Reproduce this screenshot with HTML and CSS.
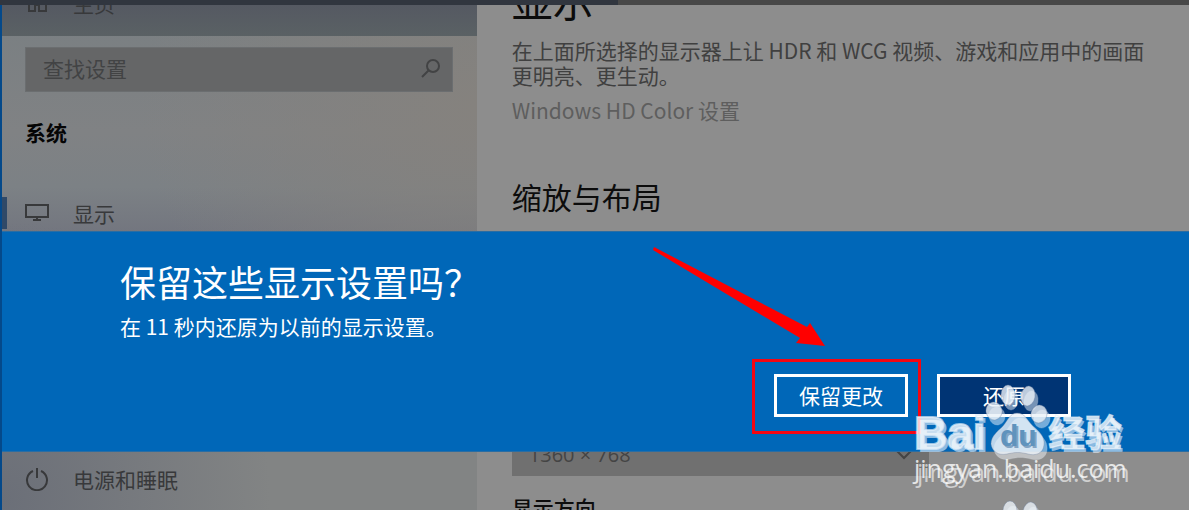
FILE: index.html
```html
<!DOCTYPE html>
<html lang="zh-CN">
<head>
    <meta charset="UTF-8">
    <title>设置</title>
    <link rel="stylesheet" href="styles.css">
</head>
<body>
    <div class="titlebar"></div>

    <div class="window">
        <nav class="sidebar">
            <a class="nav-item home" href="#">
                <svg class="icon" viewBox="0 0 24 24"><path d="M4 8v12h6v-6h4v6h7V8M14 8v6"/></svg>
                <span>主页</span>
            </a>
            <form class="search">
                <input type="search" placeholder="查找设置" aria-label="查找设置">
                <svg class="search-icon" viewBox="0 0 20 20"><circle cx="12" cy="8" r="6"/><path d="M8 12l-7 7"/></svg>
            </form>
            <h2 class="group">系统</h2>
            <a class="nav-item current" href="#">
                <svg class="icon" viewBox="0 0 24 24"><path d="M1 4h22v12H1zM12 16v3M8 19h8"/></svg>
                <span>显示</span>
            </a>
            <a class="nav-item power" href="#">
                <svg class="icon" viewBox="0 0 24 24"><path d="M8 4a10 10 0 1 0 8 0M12 1v10"/></svg>
                <span>电源和睡眠</span>
            </a>
        </nav>

        <main class="content">
            <h1>显示</h1>
            <p class="desc">在上面所选择的显示器上让 HDR 和 WCG 视频、游戏和应用中的画面更明亮、更生动。</p>
            <a class="hd-link" href="#">Windows HD Color 设置</a>
            <h2>缩放与布局</h2>
            <div class="select-box">
                <select id="resolution" aria-label="1360 × 768">
                    <option>1360 × 768</option>
                </select>
                <svg class="chevron" viewBox="0 0 16 10"><path d="M1 1l7 7 7-7"/></svg>
            </div>
            <h3>显示方向</h3>
        </main>
    </div>

    <div class="dialog" role="dialog" aria-labelledby="dialogTitle">
        <h2 id="dialogTitle">保留这些显示设置吗？</h2>
        <p>在 11 秒内还原为以前的显示设置。</p>
        <div class="buttons">
            <div class="marked">
                <button type="button">保留更改</button>
                <svg class="arrow" viewBox="0 0 174 102"><path d="M1 0L154 80l3-4 15 23-29-3 4-5L0 3z"/></svg>
            </div>
            <button type="button" class="revert">还原</button>
        </div>
    </div>

    <!-- watermark -->
    <svg class="defs">
        <symbol id="toes" viewBox="0 0 64 46">
            <ellipse cx="9" cy="27" rx="8" ry="9" transform="rotate(-12 9 27)"/>
            <ellipse cx="23" cy="11" rx="7" ry="10"/>
            <ellipse cx="43" cy="12" rx="7" ry="10" transform="rotate(10 43 12)"/>
            <ellipse cx="54" cy="30" rx="8" ry="9" transform="rotate(18 54 30)"/>
        </symbol>
        <symbol id="pad" viewBox="0 0 56 44">
            <path d="M27 1c8 0 10 7 16 13 7 6 12 11 11 19-1 9-9 11-16 9-8-2-13-2-21 0C8 44 2 39 1 32c0-8 7-13 12-18C18 8 20 1 27 1z"/>
        </symbol>
    </svg>
    <div class="watermark">
        <div class="brand">
            <span class="bai">Bai</span>
            <span class="paw">
                <svg class="toes"><use href="#toes"/></svg>
                <svg class="pad"><use href="#pad"/></svg>
                <span class="du">du</span>
            </span>
            <span class="jy">经验</span>
        </div>
        <div class="site">jingyan.baidu.com</div>
        <svg class="toes next"><use href="#toes"/></svg>
    </div>
</body>
</html>
```
FILE: styles.css
```css
* {
    box-sizing: border-box;
}

body {
    font-family: "Noto Sans CJK SC", sans-serif;
    font-size: 21px;
    margin: 0;
    height: 100vh;
    display: flex;
    flex-direction: column;
    position: relative;
    overflow: hidden;
    background-color: #8d8d8d;
}

h1, h2, h3, p {
    margin: 0;
    font-weight: normal;
}

a {
    color: inherit;
    text-decoration: none;
}

svg {
    fill: none;
    stroke: currentColor;
    stroke-width: 2;
}

.titlebar {
    height: 5px;
    background: linear-gradient(90deg, #31363f 0 52%, #484848 52%);
}

.window {
    flex: 1;
    min-height: 0;
    display: flex;
    overflow: hidden;
    border-left: 2px solid #04498a;
}

/* sidebar */
.sidebar {
    width: 40%;
    display: flex;
    flex-direction: column;
    color: #38393b;
    background:
        radial-gradient(ellipse at 100% 20%, #85827e, transparent 50%),
        radial-gradient(ellipse at 0% 98%, #6b6f78, transparent 40%),
        linear-gradient(#797f82, #808284 25%, #7c8185 36%, #73767f 45%, #828484 80%);
}

.nav-item {
    display: flex;
    align-items: center;
    gap: 24px;
    height: 32px;
    padding-left: 23px;
    flex-shrink: 0;
}

.icon {
    width: 24px;
    height: 24px;
}

.home {
    height: 62px;
    margin-top: -31px;
    padding-bottom: 4px;
    background: linear-gradient(#555962 50%, #5a6164);
}

.search {
    display: flex;
    align-items: center;
    height: 45px;
    flex-shrink: 0;
    margin: 11px 24px 0 23px;
    padding: 0 11px 4px 17px;
    background-color: #656667;
    border: 1px solid #6b6e70;
    color: #424344;
}

.search input {
    flex: 1;
    min-width: 0;
    padding: 0;
    border: 0;
    background: none;
    font: inherit;
    color: inherit;
}

.search input::placeholder {
    color: inherit;
}

.search-icon {
    width: 20px;
    height: 20px;
}

.group {
    margin: 25px 0 49px 23px;
    font-size: 21px;
    line-height: 31px;
    font-weight: bold;
    color: #050505;
}

.current {
    border-left: 5px solid #2f4968;
    padding-left: 18px;
}

.power {
    margin-top: 234px;
}

/* content */
.content {
    flex: 1;
    min-width: 0;
    padding: 0 36px 0 35px;
    color: #0c0c0c;
}

.content h1 {
    font-size: 41px;
    line-height: 60px;
    margin-top: -36px;
}

.desc {
    margin-top: 9px;
    line-height: 25px;
    color: #404040;
}

.hd-link {
    display: block;
    margin-top: 9px;
    line-height: 26px;
    color: #5e5e5e;
}

.content h2 {
    margin-top: 51px;
    font-size: 30px;
    line-height: 44px;
}

.select-box {
    display: flex;
    align-items: center;
    width: 65%;
    margin-top: 215px;
    padding: 0 17px;
    background-color: #707070;
    color: #444;
}

.select-box select {
    flex: 1;
    height: 43px;
    padding: 0;
    border: 0;
    appearance: none;
    background: none;
    font: inherit;
    font-family: "Open Sans", sans-serif;
    font-size: 20px;
    color: inherit;
}

.chevron {
    width: 16px;
    height: 10px;
}

.content h3 {
    margin-top: 16px;
    font-size: 21px;
    line-height: 30px;
    font-weight: 500;
}

/* confirmation over the settings window */
.dialog {
    position: absolute;
    top: 231px;
    left: 2px;
    right: 0;
    padding: 24px 118px 34px;
    background-color: #0067b8;
    border: solid #2a6da3;
    border-width: 1px 0;
    color: #fff;
}

.dialog h2 {
    font-size: 36px;
    line-height: 50px;
}

.dialog p {
    line-height: 30px;
    margin-top: 5px;
}

.buttons {
    display: flex;
    justify-content: flex-end;
    gap: 29px;
    margin-top: 33px;
}

.dialog button {
    width: 134px;
    height: 43px;
    padding: 0 0 2px;
    border: 3px solid #fff;
    background-color: #0067b8;
    font: inherit;
    color: #fff;
}

.dialog .revert {
    background-color: #003474;
}

.marked {
    position: relative;
}

.marked::after {
    content: "";
    position: absolute;
    inset: -15px -13px -17px -22px;
    border: 3px solid #f40612;
}

.arrow {
    position: absolute;
    right: 81px;
    bottom: 68px;
    width: 174px;
    height: 102px;
    fill: #f00;
    stroke: none;
}

/* watermark */
.defs {
    position: absolute;
    width: 0;
    height: 0;
}

.watermark {
    position: absolute;
    top: 384px;
    right: 58px;
    width: 217px;
    color: rgba(255, 255, 255, 0.8);
}

.brand {
    display: flex;
    align-items: flex-end;
    height: 74px;
    font-weight: bold;
}

.bai {
    font-family: "Liberation Sans", sans-serif;
    font-size: 46px;
    line-height: 50px;
    width: 76px;
    -webkit-text-stroke: 2px rgba(225, 238, 250, 0.7);
    text-shadow: 3px 3px rgba(235, 245, 255, 0.6);
}

.paw {
    position: relative;
    width: 58px;
    height: 74px;
}

.toes, .pad {
    position: absolute;
    fill: rgba(235, 241, 248, 0.8);
    stroke: rgba(110, 130, 160, 0.35);
    stroke-width: 1;
    filter: drop-shadow(3px 5px rgba(245, 250, 255, 0.6));
}

.toes {
    top: 0;
    left: -5px;
    width: 64px;
    height: 46px;
}

.pad {
    top: 28px;
    left: 0;
    width: 56px;
    height: 44px;
}

.du {
    position: absolute;
    top: 36px;
    left: 10px;
    font-family: "Liberation Sans", sans-serif;
    font-size: 30px;
    line-height: 32px;
    color: #5f93bd;
    text-shadow: 2px 2px rgba(50, 100, 150, 0.5);
}

.jy {
    font-size: 37px;
    line-height: 54px;
    -webkit-text-stroke: 1px rgba(225, 238, 250, 0.6);
    text-shadow: 2px 3px rgba(235, 245, 255, 0.6);
}

.site {
    font-family: "Open Sans", sans-serif;
    font-size: 25px;
    line-height: 26px;
    margin-top: -3px;
    text-shadow: 3px 4px rgba(255, 255, 255, 0.6);
}

.next {
    top: 116px;
    left: 73px;
}
```
